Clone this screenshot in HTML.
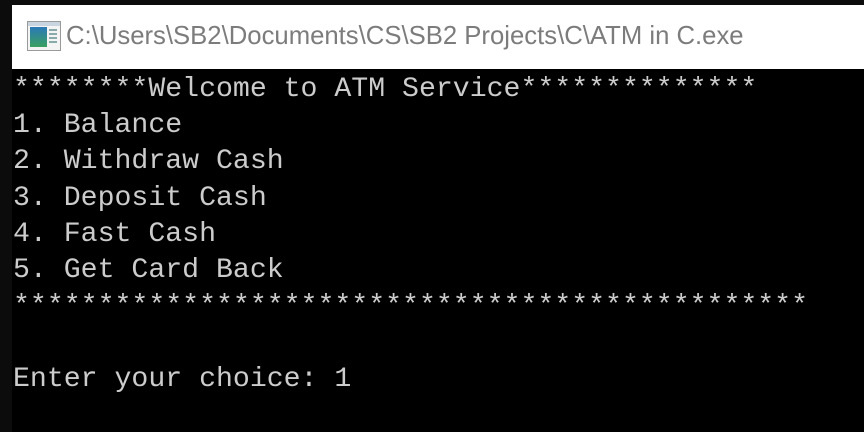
<!DOCTYPE html>
<html><head><style>
html,body{margin:0;padding:0;width:864px;height:432px;overflow:hidden;background:#0c0c0c;}
.title{position:absolute;left:12px;top:5px;width:852px;height:64px;background:#fff;}
.title span{position:absolute;left:54px;top:17px;font:25.7px "Liberation Sans",sans-serif;color:#7c7c7c;white-space:nowrap;}
.con{position:absolute;left:12px;top:69px;width:852px;height:363px;background:#000;}
pre{margin:0;position:absolute;left:1px;top:3px;font:28.2px/36.2px "Liberation Mono",monospace;color:#cccccc;}
</style></head><body>
<div class="title">
<svg style="position:absolute;left:15px;top:16px" width="34" height="30" viewBox="0 0 34 30">
<rect x="0.5" y="0.5" width="33" height="29" fill="#f4f4f4" stroke="#9a9a9a"/>
<rect x="1" y="1" width="32" height="4" fill="#c8d4e0"/>
<defs><linearGradient id="g" x1="0" y1="0" x2="0" y2="1"><stop offset="0" stop-color="#2a7ab8"/><stop offset="1" stop-color="#3aa060"/></linearGradient></defs>
<rect x="3" y="6" width="17" height="20" fill="url(#g)"/>
<rect x="22" y="8" width="8" height="2" fill="#8aa"/><rect x="22" y="12" width="8" height="2" fill="#8aa"/><rect x="22" y="16" width="8" height="2" fill="#8aa"/><rect x="22" y="20" width="8" height="2" fill="#8aa"/>
</svg>
<span>C:\Users\SB2\Documents\CS\SB2 Projects\C\ATM in C.exe</span>
</div>
<div class="con"><pre>********Welcome to ATM Service**************
1. Balance
2. Withdraw Cash
3. Deposit Cash
4. Fast Cash
5. Get Card Back
***********************************************

Enter your choice: 1</pre></div>
</body></html>
